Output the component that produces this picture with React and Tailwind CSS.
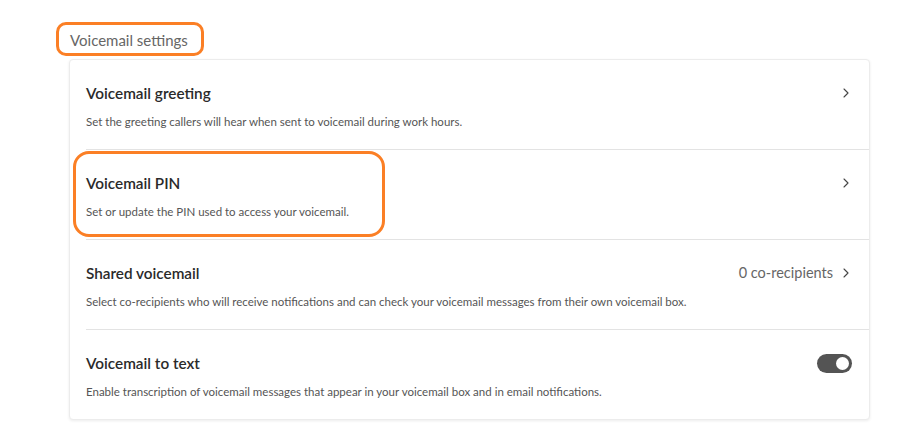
import { ChevronRight } from "lucide-react";

const rows = [
    {
        id: "greeting",
        title: "Voicemail greeting",
        desc: "Set the greeting callers will hear when sent to voicemail during work hours.",
        kind: "link",
    },
    {
        id: "pin",
        title: "Voicemail PIN",
        desc: "Set or update the PIN used to access your voicemail.",
        kind: "link",
    },
    {
        id: "shared",
        title: "Shared voicemail",
        desc: "Select co-recipients who will receive notifications and can check your voicemail messages from their own voicemail box.",
        kind: "link",
        value: "0 co-recipients",
    },
    {
        id: "text",
        title: "Voicemail to text",
        desc: "Enable transcription of voicemail messages that appear in your voicemail box and in email notifications.",
        kind: "toggle",
    },
];

function Toggle() {
    return (
        <div className="mr-[2px] w-[35px] h-[19px] rounded-full bg-[#545454] flex items-center justify-end px-[3px]">
            <div className="w-[13px] h-[13px] rounded-full bg-white" />
        </div>
    );
}

export default function App() {
    return (
        <div className="relative w-[921px] h-[442px] bg-white font-['Lato','Liberation_Sans',sans-serif]">
            <div className="pl-[69px] pr-[51px] pt-[30px]">
                <h2 className="pl-[1px] text-[15px] leading-[20px] text-[#666]">Voicemail settings</h2>

                <section className="mt-[9px] rounded-[4px] bg-white border border-[#ececec] shadow-[0_1px_3px_rgba(0,0,0,0.08)]">
                    {rows.map((r, i) => (
                        <div key={r.id} className="pl-[16px]">
                            <div className="flex items-start pr-[15px] pt-[23px] pb-[19px]">
                                <div className="flex-1">
                                    <div className="text-[15.3px] leading-[20px] font-semibold text-[#2a2a2a]">
                                        {r.title}
                                    </div>
                                    <p className="mt-[11px] text-[11.5px] leading-[16px] text-[#555]">{r.desc}</p>
                                </div>
                                <div className="h-[20px] flex items-center gap-[5px]">
                                    {r.value && (
                                        <span className="text-[14.5px] text-[#666]">{r.value}</span>
                                    )}
                                    {r.kind === "link" ? (
                                        <ChevronRight size={16} strokeWidth={1.6} className="text-[#444]" />
                                    ) : (
                                        <Toggle />
                                    )}
                                </div>
                            </div>
                            {i < rows.length - 1 && <div className="h-px bg-[#e3e3e3]" />}
                        </div>
                    ))}
                </section>
            </div>

            {/* annotation outlines */}
            <div className="absolute left-[56px] top-[22px] w-[148px] h-[34px] rounded-[10px] border-[3px] border-[#fb7f25]" />
            <div className="absolute left-[73px] top-[151px] w-[312px] h-[86px] rounded-[16px] border-[3px] border-[#fb7f25]" />
        </div>
    );
}
